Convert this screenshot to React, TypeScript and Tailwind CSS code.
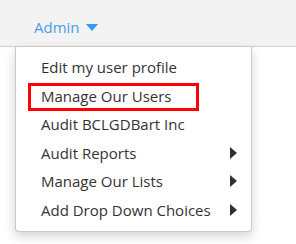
import React from "react";

const items = [
  { label: "Edit my user profile", sub: false },
  { label: "Manage Our Users", sub: false, marked: true },
  { label: "Audit BCLGDBart Inc", sub: false },
  { label: "Audit Reports", sub: true },
  { label: "Manage Our Lists", sub: true },
  { label: "Add Drop Down Choices", sub: true },
];

export default function App() {
  return (
    <div
      className="relative w-[296px] h-[244px] overflow-hidden bg-white"
      style={{ fontFamily: '"Open Sans", "Liberation Sans", sans-serif' }}
    >
      <div className="h-[47px] bg-[#f3f3f3] border-b border-[#cfcfcf] pl-[34px] pt-[17px]">
        <button className="flex items-center gap-[6px] text-[15px] leading-[20px] text-[#4b9bea]">
          Admin
          <span className="inline-block w-0 h-0 border-x-[6.5px] border-x-transparent border-t-[7px] border-t-[#3399ff] mt-[1px]" />
        </button>
      </div>
      <div className="relative ml-[15px] w-[237px] bg-white border-x border-b border-[#c8c8c8] rounded-b-[4px] shadow-[0_4px_12px_rgba(0,0,0,0.18)] pt-[6px] pb-[7px]">
        <ul>
          {items.map((it) => (
            <li
              key={it.label}
              className="relative flex items-center justify-between pl-[25px] pr-[14px] text-[15px] leading-[28.5px] text-[#333]"
            >
              <span>{it.label}</span>
              {it.sub && (
                <span className="inline-block w-0 h-0 border-y-[6px] border-y-transparent border-l-[7.5px] border-l-[#2f2f2f]" />
              )}
              {it.marked && (
                <span className="absolute left-[12px] top-[1.5px] w-[171px] h-[28px] border-[3px] border-[#ff0000] pointer-events-none" />
              )}
            </li>
          ))}
        </ul>
      </div>
    </div>
  );
}
